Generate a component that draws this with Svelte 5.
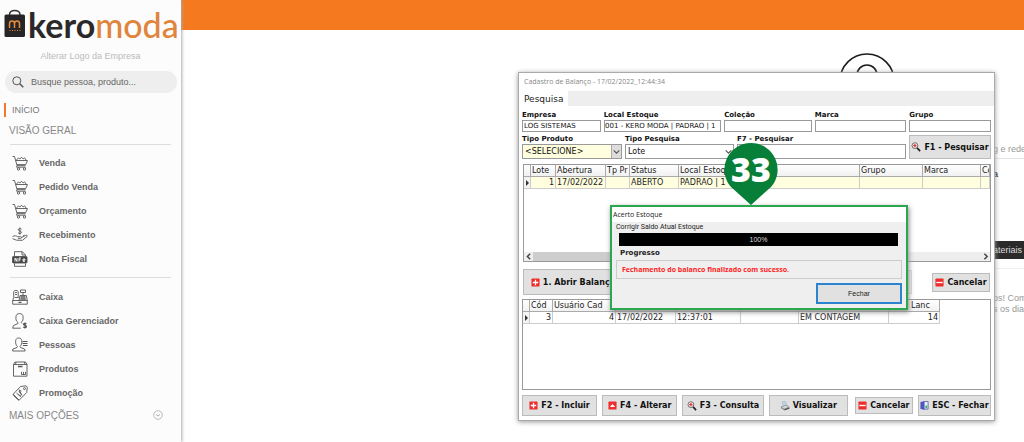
<script>
  const sales = [
    { label: 'Venda', icon: 'cart' },
    { label: 'Pedido Venda', icon: 'cart' },
    { label: 'Orçamento', icon: 'cart' },
    { label: 'Recebimento', icon: 'hand' },
    { label: 'Nota Fiscal', icon: 'nfe' }
  ];
  const admin = [
    { label: 'Caixa', icon: 'register' },
    { label: 'Caixa Gerenciador', icon: 'manager' },
    { label: 'Pessoas', icon: 'people' },
    { label: 'Produtos', icon: 'box' },
    { label: 'Promoção', icon: 'tag' }
  ];
</script>

{#snippet menuIcon(name)}
  <svg class="menu-icon" viewBox="0 0 16 16" fill="none" stroke="#555" stroke-width="0.9" aria-hidden="true">
    {#if name === 'cart'}
      <path d="M0.500 1.500h2l2.600 9.200h8.400M3.500 5.500h12l-1.800 4.100H5M5 10.700l-.4 1.500h9" />
      <path d="M4.500 5l2-2.200 1.300 1.300 1.700-1.900 1.600 1.700 1.500-1 1.500 2.100" />
      <circle cx="6.500" cy="14" r="1.200" /><circle cx="12.500" cy="14" r="1.200" />
    {:else if name === 'hand'}
      <path d="M9.500 2.200C8.500 1.200 6 1.500 6.200 2.900c.2 1.300 3.300.9 3.300 2.400C9.500 6.800 6.800 6.800 6 5.700M7.900 0.500v7.200" />
      <path d="M.5 9.500c2-1 3.500-1 5 .2h3.200c1.200.1 1.200 1.600 0 1.700H6M9.500 10.500l4-2c1.200-.6 2.300.1 1.500 1l-4.500 3.800-6-.1-4-1.600M11 9l1.500-1" />
    {:else if name === 'nfe'}
      <path d="M2.500 5V.7h7.800L13.500 4v1M10 .7V4h3.500M2.500 12.500v2.800h11v-2.800" />
      <rect x="0.500" y="5.500" width="14.500" height="6.500" rx="0.800" fill="#444" />
      <path stroke="#fff" d="M3 10.500V7l2 3.500V7M7 10.500V7h2M7 8.800h1.700M13 10.300h-2V8h2v1.200h-2" />
    {:else if name === 'register'}
      <path d="M.7 11.500l1-3V2.500c1-1.500 3.500-1.500 4.500 0v6M.7 11.500h14.600v3.700H.7zM15.300 11.500l-1-5H8l-1 5M8.500 1h5v2.500h-5zM11 3.500v3M3 3.500h2M3 5.500h2M2.500 8.500h4" />
      <path stroke-width="1.300" d="M8.500 8h5M8.300 10h5.500M6.500 13.400h3" />
    {:else if name === 'manager'}
      <path d="M10 10.500L9 9.500c2-1.500 2.300-3 2-6C10.800 1.500 9.500.6 7.500.6S4.200 1.500 4 3.500c-.3 3 0 4.500 2 6v1L1.500 12.500.7 15.200h8" />
      <path stroke-width="1.200" d="M14.500 10.800c-1-.9-3-.7-3 .5s3 .8 3 2.100-2.200 1.400-3.200.4M13 9.500v6" />
    {:else if name === 'people'}
      <path d="M8.500 10.500L8 9.500c1.500-1.500 2-3 1.700-6C9.500 2 8.500 1 6.700 1S4 2 3.700 3.500c-.3 3 .2 4.500 1.700 6l-.4 1L1 12 .5 14h12.700l-.7-2z" />
      <path stroke-width="1.200" d="M10.500 4.500h5M10.500 6.500h5M11 8.500h4.500" />
    {:else if name === 'box'}
      <path d="M1.500 3.500L3 1h10.500L15 3.500v11.700H1.500zM1.500 3.500H15M4 1l-.5 2.500M12.500 1l.5 2.500M9.500 13.500v-2.700M9.500 13.500h4M11.500 13.500v-2.700M13.500 13.500v-2.700" />
      <path stroke-width="1.500" d="M6 5.500h4.500" />
    {:else}
      <path d="M8.500 1.500l5.500-.7 1.300 1.400-.6 5.300-7.500 7.700-6-6zM1.200 9.200l.5 1.500 5 4.700" />
      <circle cx="12.500" cy="3.600" r="1" />
      <path d="M9.500 6c-1.500-1-3 .3-2 1.500s2.500 1.200 1.700 2.300-2.400.6-3-.4M4.500 8l4.500 4M7 4.500l3 6" />
    {/if}
  </svg>
{/snippet}

{#snippet menu(items)}
  <ul>
    {#each items as item}
      <li><a href="#menu">{@render menuIcon(item.icon)}{item.label}</a></li>
    {/each}
  </ul>
{/snippet}

{#snippet badge(kind)}
  <svg class="badge" viewBox="0 0 10 10" aria-hidden="true">
    <rect x="0.500" y="0.500" width="9" height="9" rx="1" fill="#ef2d2d" />
    {#if kind === 'plus'}
      <path d="M5 2v6M2 5h6" stroke="#fff" stroke-width="1.400" />
    {:else if kind === 'up'}
      <path d="M2 6.800L5 3.200l3 3.600z" fill="#fff" />
    {:else}
      <path d="M1.500 5h7" stroke="#fff" stroke-width="1.500" />
    {/if}
  </svg>
{/snippet}

{#snippet lens()}
  <svg class="lens" viewBox="0 0 11 11" fill="none" aria-hidden="true">
    <circle cx="4.300" cy="4" r="3.200" fill="#fbeeee" stroke="#555" stroke-width="0.900" />
    <path d="M4.300 2.200v3.600M2.500 4h3.600" stroke="#d33" stroke-width="1.300" />
    <path d="M6.700 6.500L10 10" stroke="#222" stroke-width="1.800" />
  </svg>
{/snippet}

<div class="page">
  <aside>
    <div class="logo">
      <svg viewBox="0 0 22 29" aria-hidden="true">
        <path d="M5.500 8V5.500C6 .2 15.500.2 16 5.500V8" fill="none" stroke="#333" stroke-width="1.500" />
        <rect x="0.500" y="5.500" width="20.500" height="22.500" rx="1.500" fill="#272525" />
        <path d="M5.500 19v-4.300c0-3.500 5-3.500 5 0V19M10.500 14.700c0-3.500 5-3.500 5 0V19" fill="none" stroke="#e78a3c" stroke-width="1.500" />
        <path d="M5.500 21.500h11" stroke="#e78a3c" stroke-dasharray="1 1.500" />
      </svg>
      <span class="word"><b>kero</b><i>moda</i></span>
    </div>
    <a class="change" href="#logo">Alterar Logo da Empresa</a>
    <label class="search">
      <svg viewBox="0 0 12 12" fill="none" stroke="#555" aria-hidden="true">
        <circle cx="4.800" cy="4.800" r="4" /><path d="M7.800 7.800l3.500 3.500" stroke-width="1.500" />
      </svg>
      <input type="text" aria-label="Busca" placeholder="Busque pessoa, produto..." />
    </label>
    <nav>
      <a class="home" href="#inicio">INÍCIO</a>
      <h2>VISÃO GERAL</h2>
      {@render menu(sales)}
      {@render menu(admin)}
      <button class="more">
        MAIS OPÇÕES
        <svg viewBox="0 0 10 10" fill="none" stroke="#aaa" aria-hidden="true">
          <circle cx="5" cy="5" r="4.300" stroke-width="0.800" /><path d="M3 4.300l2 1.800 2-1.800" />
        </svg>
      </button>
    </nav>
  </aside>

  <main>
    <header></header>
    <svg class="rings" viewBox="0 0 56 56" fill="none" stroke="#1c1c1c" stroke-width="1.600" aria-hidden="true">
      <circle cx="28" cy="28" r="27" /><circle cx="28" cy="22" r="10" />
    </svg>
    <div class="behind">
      <p class="line">g e rede</p>
      <p class="strong">a</p>
      <p class="chip">ateriais</p>
      <p class="copy">os! Com<br />s os dia</p>
    </div>

    <section class="window">
      <h1>Cadastro de Balanço - 17/02/2022_12:44:34</h1>
      <div class="tabs"><button>Pesquisa</button></div>
      <div class="body">
        <div class="fields first">
          <label>Empresa<input value="LOG SISTEMAS" /></label>
          <label>Local Estoque<input value="0001 - KERO MODA | PADRAO | 1" class="scrolled" /></label>
          <label>Coleção<input /></label>
          <label>Marca<input /></label>
          <label>Grupo<input /></label>
        </div>
        <div class="fields second">
          <label>Tipo Produto
            <span class="pick boxed"><select class="cream"><option>&lt;SELECIONE&gt;</option></select>
              <svg viewBox="0 0 8 8" fill="none" stroke="#555" aria-hidden="true"><path d="M1.500 3L4 5.500 6.500 3" /></svg></span>
          </label>
          <label>Tipo Pesquisa
            <span class="pick"><select><option>Lote</option></select>
              <svg viewBox="0 0 8 8" fill="none" stroke="#555" aria-hidden="true"><path d="M1.500 3L4 5.500 6.500 3" /></svg></span>
          </label>
          <label>F7 - Pesquisar<input class="tall" /></label>
          <button class="btn">{@render lens()}F1 - Pesquisar</button>
        </div>

        <div class="grid upper">
          <div class="clip">
            <table>
              <colgroup><col style:width="7px" /><col style:width="25px" /><col style:width="50px" /><col style:width="24px" /><col style:width="49px" /><col style:width="181px" /><col style:width="63px" /><col style:width="58px" /><col /></colgroup>
              <thead><tr><th></th><th>Lote</th><th>Abertura</th><th>Tp Pr</th><th>Status</th><th>Local Estoque</th><th>Grupo</th><th>Marca</th><th>Co</th></tr></thead>
              <tbody><tr class="cream"><td class="mark"></td><td class="num">1</td><td>17/02/2022</td><td></td><td>ABERTO</td><td>PADRAO | 1</td><td></td><td></td><td></td></tr></tbody>
            </table>
          </div>
          <div class="scroll">
            <svg viewBox="0 0 8 8" fill="none" stroke="#444" aria-hidden="true"><path d="M5.500 1.500L3 4l2.500 2.500" stroke-width="1.300" /></svg>
            <span></span>
            <svg viewBox="0 0 8 8" fill="none" stroke="#444" aria-hidden="true"><path d="M3 1.500L5.500 4 3 6.500" stroke-width="1.300" /></svg>
          </div>
        </div>

        <div class="actions">
          <button class="btn open">{@render badge('plus')}1. Abrir Balanço</button>
          <span class="slot"></span>
          <button class="btn small">{@render badge('minus')}Cancelar</button>
        </div>

        <div class="grid lower">
          <table>
            <colgroup><col style:width="7px" /><col style:width="23px" /><col style:width="63px" /><col style:width="60px" /><col style:width="65px" /><col style:width="58px" /><col style:width="90px" /><col style:width="51px" /></colgroup>
            <thead><tr><th></th><th>Cód</th><th>Usuário Cad</th><th></th><th></th><th></th><th></th><th class="lanc">Lanc</th></tr></thead>
            <tbody><tr><td class="mark"></td><td class="num">3</td><td class="num">4</td><td>17/02/2022</td><td>12:37:01</td><td></td><td>EM CONTAGEM</td><td class="num">14</td></tr></tbody>
          </table>
        </div>

        <footer>
          <button class="btn">{@render badge('plus')}F2 - Incluir</button>
          <button class="btn">{@render badge('up')}F4 - Alterar</button>
          <button class="btn">{@render lens()}F3 - Consulta</button>
          <button class="btn">
            <svg class="lens" viewBox="0 0 11 11" aria-hidden="true">
              <path d="M2 1l4-.7L8 5 4 6z" fill="#b9d5ea" stroke="#9ab" stroke-width="0.500" />
              <path d="M1 6l6-2 3.500 2.500v2L5 10.500 1 8z" fill="#8d9296" /><path d="M2 6.500l5-1.500 2 1.500-4.500 2z" fill="#d5d8da" /><path d="M5 9.500l5-1.500" stroke="#444" />
            </svg>Visualizar</button>
          <button class="btn small">{@render badge('minus')}Cancelar</button>
          <button class="btn">
            <svg class="badge" viewBox="0 0 10 10" aria-hidden="true">
              <path d="M4 .5h5v8.500H4z" fill="#e8f2ff" stroke="#3c4a9a" stroke-width="0.800" /><path d="M.5 1L5 .2v9.600L.5 9z" fill="#4d55c4" /><path d="M6 5h2v3H6z" fill="#3ca860" />
            </svg>ESC - Fechar</button>
        </footer>
      </div>
    </section>

    <section class="dialog">
      <h3>Acerto Estoque</h3>
      <div class="inner">
        <p class="caption">Corrigir Saldo Atual Estoque</p>
        <div class="bar">100%</div>
        <p class="progress">Progresso</p>
        <p class="message">Fechamento do balanco finalizado com sucesso.</p>
        <button>Fechar</button>
      </div>
    </section>

    <div class="pin">
      <svg viewBox="0 0 54 62" aria-hidden="true"><path d="M27 0a26.500 26.500 0 0 1 20 44L27 62 7 44A26.500 26.500 0 0 1 27 0z" fill="#087f38" /></svg>
      <strong>33</strong>
    </div>
  </main>
</div>

<style>
  :global(body) { margin: 0; background: #fff; }
  * { box-sizing: border-box; }
  h1, h2, h3, p, ul { margin: 0; padding: 0; font-weight: 400; }
  button, input, select { font: inherit; color: inherit; margin: 0; border-radius: 0; }
  a { color: inherit; text-decoration: none; }
  .page { display: flex; min-height: 100vh; overflow: hidden; font-family: "Liberation Sans", Arial, sans-serif; font-size: 9px; }

  aside { flex: 0 0 181px; min-width: 0; background: #fcfcfc; box-shadow: 1px 0 3px #aaa; z-index: 1; color: #777; padding-bottom: 12px; }
  .logo { display: flex; height: 42px; padding: 9px 0 0 4px; gap: 2px; }
  .logo svg { width: 22px; height: 29px; flex: none; }
  .word { font: 34px/31px Lato, sans-serif; color: #2b2829; white-space: nowrap; }
  .word b { font-weight: 700; }
  .word i { font-style: normal; font-weight: 500; color: #df853d; }
  .change { display: block; height: 29px; line-height: 28px; text-align: center; color: #bbb; }
  .search { display: flex; align-items: center; gap: 7px; height: 22px; margin: 0 4px 0 5px; padding-left: 7px; border-radius: 11px; background: #eee; }
  .search svg { width: 12px; height: 12px; }
  .search input { flex: 1; min-width: 0; border: 0; padding: 0; background: none; outline: 0; }
  .search input::placeholder { color: #666; opacity: 1; }
  .home { display: flex; align-items: center; height: 14px; margin: 10px 0 0 4px; padding-left: 6px; border-left: 2px solid #f4792b; }
  h2 { font-size: 10px; line-height: 28px; height: 27px; padding-left: 9px; color: #888; }
  ul { list-style: none; margin: 0 10px; padding: 6px 0; border-top: 1px solid #ddd; }
  ul + ul { padding: 7px 0 0; }
  li a { display: flex; align-items: center; height: 24px; gap: 11px; padding-left: 2px; font-weight: 700; color: #666; }
  .menu-icon { width: 16px; height: 16px; }
  .more { display: flex; justify-content: space-between; align-items: center; width: 100%; height: 20px; padding: 0 18px 0 9px; border: 0; background: none; font-size: 10px; color: #888; }
  .more svg { width: 10px; height: 10px; }

  main { position: relative; flex: 1; min-width: 0; }
  header { height: 30px; background: #f4791f; }
  .rings { position: absolute; left: 658px; top: 53px; width: 56px; height: 56px; }
  .behind { margin: 110px 0 0 812px; color: #999; white-space: nowrap; }
  .line { height: 19px; line-height: 18px; border-bottom: 1px solid #e5e5e5; }
  .strong { height: 82px; line-height: 30px; font-weight: 700; color: #333; }
  .chip { height: 18px; line-height: 18px; background: #2b2b2b; color: #ddd; }
  .copy { margin-top: 9px; padding-top: 24px; line-height: 11px; border-top: 1px solid #eee; }

  .window { position: absolute; left: 337px; top: 72px; width: 477px; background: #fff; border: 1px solid #aaa; box-shadow: 0 1px 5px #999; font-family: "DejaVu Sans", Verdana, sans-serif; font-size: 8px; color: #222; }
  h1 { height: 18px; padding-left: 5px; font: 7px/17px "Open Sans", sans-serif; color: #888; }
  .tabs { display: flex; background: #eee; height: 15px; }
  .tabs button { border: 0; background: #fff; font-size: 9px; padding: 0 5px; }
  .body { padding: 4px 3px; }
  .fields { display: grid; gap: 3px; }
  .first { grid-template-columns: 79fr 118fr 88fr 92fr 82fr; }
  .second { grid-template-columns: 100fr 109fr 169fr 82fr; margin-top: 2px; }
  .fields label { display: flex; flex-direction: column; min-width: 0; font-size: 7px; line-height: 10px; font-weight: 700; color: #111; white-space: nowrap; }
  .fields input { width: 100%; height: 12px; padding: 0 1px; border: 1px solid #999; background: #fff; font-weight: 400; }
  .fields input.scrolled { text-indent: -4px; padding: 0; }
  .fields input.tall { height: 15px; }
  .pick { position: relative; display: block; }
  .pick select { display: block; width: 100%; height: 15px; padding: 0 2px; border: 1px solid #999; appearance: none; background: #fff; font-size: 8px; font-weight: 400; }
  .pick select.cream { background: #ffffdf; }
  .pick svg { position: absolute; right: 1px; top: 1px; width: 9px; height: 13px; }
  .boxed svg { background: #ddd; border-left: 1px solid #aaa; width: 10px; }
  .btn { display: flex; align-items: center; justify-content: center; gap: 3px; height: 21px; padding: 0 3px; border: 1px solid #bbb; background: #e1e1e1; font-weight: 700; color: #111; white-space: nowrap; }
  .second .btn { height: 24px; align-self: end; padding: 0; margin-top: -2px; }
  .badge { width: 9px; height: 9px; flex: none; }
  .lens { width: 10px; height: 10px; flex: none; }
  .grid { border: 1px solid #999; background: #fff; overflow: hidden; }
  .upper { margin: 5px 0 0 1px; height: 98px; display: flex; flex-direction: column; justify-content: space-between; }
  .clip { overflow: hidden; }
  table { table-layout: fixed; border-collapse: separate; border-spacing: 0; line-height: 11px; }
  .upper table { width: 100%; }
  .lower table { width: 417px; }
  th, td { height: 12px; padding: 0 1px; font-weight: 400; text-align: left; white-space: nowrap; overflow: hidden; border-right: 1px solid #ccc; border-bottom: 1px solid #ccc; }
  th { background: linear-gradient(#fff, #f1f1f1); border-color: #aaa; }
  tr.cream td { background: #ffffdf; }
  .num { text-align: right; padding-right: 1px; }
  .lanc { padding-left: 22px; }
  tbody td.mark { background: #f3f3f3; }
  .mark::before { content: ""; display: block; border-left: 3px solid #333; border-top: 3px solid transparent; border-bottom: 3px solid transparent; width: 0; margin-left: 1px; }
  .scroll { display: flex; align-items: center; height: 9px; background: #eee; }
  .scroll svg { width: 9px; height: 9px; }
  .scroll span { height: 9px; width: 300px; background: #cdcdcd; margin-right: auto; }
  .actions { display: flex; align-items: center; gap: 3px; margin-top: 3px; height: 34px; padding: 0 1px; }
  .open { height: 26px; width: 100px; }
  .slot { flex: 1; height: 24px; margin-right: 17px; border: 1px solid #ddd; background: #f4f4f4; }
  .small { width: 58px; height: 19px; }
  .lower { height: 91px; }
  footer { display: grid; grid-template-columns: 74fr 74fr 80fr 78fr 59fr 72fr; column-gap: 5px; align-items: center; margin-top: 5px; }
  footer .small { width: auto; height: 17px; margin-left: 2px; }
  footer .btn { padding: 0; }

  .dialog { position: absolute; left: 429px; top: 205px; width: 298px; border: 2px solid #2ba84f; background: #efefef; box-shadow: 1px 2px 5px #888; color: #222; font: 7px/10px "Open Sans", sans-serif; }
  h3 { height: 15px; padding-left: 1px; font-size: 7px; line-height: 15px; background: #fff; }
  .inner { padding: 0 4px 4px; display: flex; flex-direction: column; }
  .caption { height: 11px; font: 7px/10px Roboto, sans-serif; }
  .bar { height: 13px; margin: 0 4px 0 3px; background: #000; color: #ddd; text-align: center; font: 7px/13px "Liberation Sans", sans-serif; }
  .progress { line-height: 14px; padding-left: 4px; font-family: "DejaVu Sans", Verdana, sans-serif; font-weight: 700; }
  .message { height: 19px; line-height: 17px; border: 1px solid #ccc; padding-left: 5px; font-weight: 700; color: #f22; }
  .dialog button { align-self: flex-end; width: 86px; height: 21px; margin-top: 4px; padding: 0; border: 2px solid #2c84cf; background: #e1e1e1; font: 7px/15px "Liberation Sans", sans-serif; }
  .pin { position: absolute; left: 543px; top: 143px; width: 54px; height: 62px; }
  .pin svg { display: block; width: 100%; height: 100%; }
  .pin strong { position: absolute; inset: 0; text-align: center; color: #fff; font: 800 34px/52px "Open Sans", sans-serif; }
</style>
